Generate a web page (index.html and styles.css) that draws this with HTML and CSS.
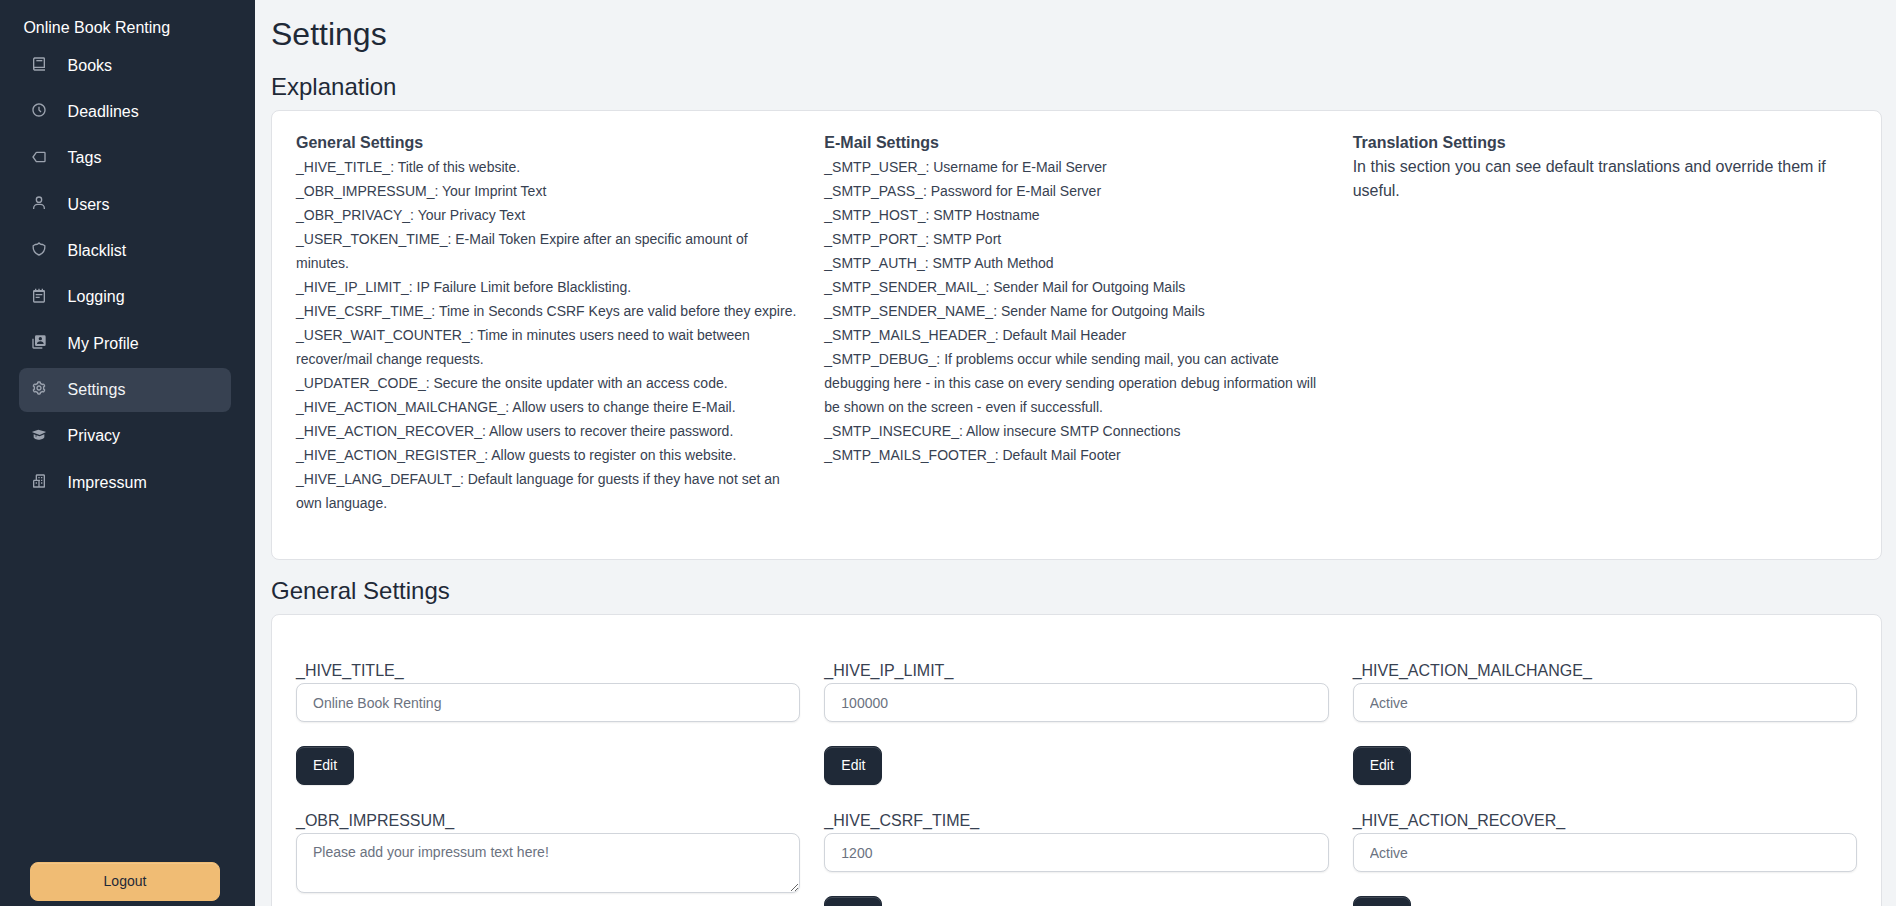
FILE: index.html
```
<!DOCTYPE html>
<html lang="en">
<head>
<meta charset="utf-8">
<title>Settings</title>
<link rel="stylesheet" href="styles.css">
</head>
<body>
<div class="layout">
  <aside class="sidebar">
    <div class="brand">Online Book Renting</div>
    <nav class="nav">
      <a class="nav-link"><svg class="icon" viewBox="0 0 24 24"><path d="M6 22h15v-2H6.012C5.55 19.988 5 19.805 5 19s.55-.988 1.012-1H21V4c0-1.103-.897-2-2-2H6c-1.206 0-3 .799-3 3v14c0 2.201 1.794 3 3 3zM5 8V5c0-.805.55-.988 1-1h13v12H5V8z"/><path d="M8 6h9v2H8z"/></svg>Books</a>
      <a class="nav-link"><svg class="icon" viewBox="0 0 24 24"><path d="M12 2C6.486 2 2 6.486 2 12s4.486 10 10 10 10-4.486 10-10S17.514 2 12 2zm0 18c-4.411 0-8-3.589-8-8s3.589-8 8-8 8 3.589 8 8-3.589 8-8 8z"/><path d="M13 7h-2v5.414l3.293 3.293 1.414-1.414L13 11.586z"/></svg>Deadlines</a>
      <a class="nav-link"><svg class="icon line" viewBox="0 0 24 24"><path d="M8.5 5H20a1 1 0 0 1 1 1v12a1 1 0 0 1-1 1H8.500a1 1 0 0 1-.8-.4L3 12l4.700-6.600a1 1 0 0 1 .8-.4z"/></svg>Tags</a>
      <a class="nav-link"><svg class="icon" viewBox="0 0 24 24"><path d="M12 2a5 5 0 1 0 5 5 5 5 0 0 0-5-5zm0 8a3 3 0 1 1 3-3 3 3 0 0 1-3 3zm9 11v-1a7 7 0 0 0-7-7h-4a7 7 0 0 0-7 7v1h2v-1a5 5 0 0 1 5-5h4a5 5 0 0 1 5 5v1z"/></svg>Users</a>
      <a class="nav-link"><svg class="icon line" viewBox="0 0 24 24"><path d="M12 3c-1.500 1.700-3.300 2.500-5.500 2.100L3.200 7.200C2.800 13.500 5 18.500 12 21c7-2.500 9.200-7.500 8.800-13.800l-3.300-2.100C15.300 5.500 13.500 4.700 12 3z"/></svg>Blacklist</a>
      <a class="nav-link"><svg class="icon" viewBox="0 0 24 24"><path d="M19 3h-1V1h-2v2h-3V1h-2v2H8V1H6v2H5a2 2 0 0 0-2 2v15a2 2 0 0 0 2 2h14a2 2 0 0 0 2-2V5a2 2 0 0 0-2-2zM5 20V6h14v14H5z"/><path d="M7 9h10v2H7zM7 13h6v2H7z"/></svg>Logging</a>
      <a class="nav-link"><svg class="icon" viewBox="0 0 24 24"><path d="M2 7v13c0 1.103.897 2 2 2h13v-2H4V7H2z"/><path fill-rule="evenodd" d="M20 2H8a2 2 0 0 0-2 2v12a2 2 0 0 0 2 2h12a2 2 0 0 0 2-2V4a2 2 0 0 0-2-2zm-6 2.500a2.500 2.500 0 1 1 0 5 2.500 2.500 0 0 1 0-5zM19 15H9v-.25C9 12.901 11.254 11 14 11s5 1.901 5 3.750V15z"/></svg>My Profile</a>
      <a class="nav-link active"><svg class="icon" viewBox="0 0 24 24"><path d="M12 16c2.206 0 4-1.794 4-4s-1.794-4-4-4-4 1.794-4 4 1.794 4 4 4zm0-6c1.084 0 2 .916 2 2s-.916 2-2 2-2-.916-2-2 .916-2 2-2z"/><path d="m2.845 16.136 1 1.730c.531.917 1.809 1.261 2.730.730l.529-.306A8.100 8.100 0 0 0 9 19.402V20c0 1.103.897 2 2 2h2c1.103 0 2-.897 2-2v-.598a8.132 8.132 0 0 0 1.896-1.111l.529.306c.923.530 2.198.188 2.731-.731l.999-1.729a2.001 2.001 0 0 0-.731-2.732l-.505-.292a7.718 7.718 0 0 0 0-2.224l.505-.292a2.002 2.002 0 0 0 .731-2.732l-.999-1.729c-.531-.920-1.808-1.265-2.731-.732l-.529.306A8.100 8.100 0 0 0 15 4.598V4c0-1.103-.897-2-2-2h-2c-1.103 0-2 .897-2 2v.598a8.132 8.132 0 0 0-1.896 1.111l-.529-.306c-.924-.531-2.200-.187-2.731.732l-.999 1.729a2.001 2.001 0 0 0 .731 2.732l.505.292a7.683 7.683 0 0 0 0 2.223l-.505.292a2.003 2.003 0 0 0-.731 2.733zm3.326-2.758A5.703 5.703 0 0 1 6 12c0-.462.058-.926.170-1.378a.999.999 0 0 0-.470-1.108l-1.123-.650.998-1.729 1.145.662a.997.997 0 0 0 1.188-.142 6.071 6.071 0 0 1 2.384-1.399A1 1 0 0 0 11 5.300V4h2v1.300a1 1 0 0 0 .708.956 6.083 6.083 0 0 1 2.384 1.399.999.999 0 0 0 1.188.142l1.144-.661 1 1.729-1.124.649a1 1 0 0 0-.470 1.108c.112.452.170.916.170 1.378 0 .461-.058.925-.171 1.378a1 1 0 0 0 .471 1.108l1.123.649-.998 1.729-1.145-.661a.996.996 0 0 0-1.188.142 6.071 6.071 0 0 1-2.384 1.399A1 1 0 0 0 13 18.700l.002 1.300H11v-1.300a1 1 0 0 0-.708-.956 6.083 6.083 0 0 1-2.384-1.399.992.992 0 0 0-1.188-.141l-1.144.662-1-1.729 1.124-.651a1 1 0 0 0 .471-1.108z"/></svg>Settings</a>
      <a class="nav-link"><svg class="icon" viewBox="0 0 24 24"><path d="M2 7v1l11 4 9-4V7L11 4z"/><path d="M4 11v4.267c0 1.621 4.001 3.893 9 3.734 4-.126 6.586-1.972 7-3.467.024-.089.037-.178.037-.268V11L13 14l-5-1.667v3.213l-1-.364V12l-3-1z"/></svg>Privacy</a>
      <a class="nav-link"><svg class="icon" viewBox="0 0 24 24"><path d="M19 2H9c-1.103 0-2 .897-2 2v6H5c-1.103 0-2 .897-2 2v9a1 1 0 0 0 1 1h16a1 1 0 0 0 1-1V4c0-1.103-.897-2-2-2zM5 12h6v8H5v-8zm14 8h-6v-8c0-1.103-.897-2-2-2H9V4h10v16z"/><path d="M11 6h2v2h-2zM15 6h2v2h-2zM15 10h2v2h-2zM15 14h2v2h-2zM7 14h2v2H7zM12 10h1.500v2H12z"/></svg>Impressum</a>
    </nav>
    <button class="btn btn-logout">Logout</button>
  </aside>
  <main class="content">
    <h1 class="page-title">Settings</h1>
    <h2 class="section-title">Explanation</h2>
    <section class="card explanation">
      <div class="columns">
        <div>
          <strong>General Settings</strong>
          <p>_HIVE_TITLE_: Title of this website.</p>
          <p>_OBR_IMPRESSUM_: Your Imprint Text</p>
          <p>_OBR_PRIVACY_: Your Privacy Text</p>
          <p>_USER_TOKEN_TIME_: E-Mail Token Expire after an specific amount of minutes.</p>
          <p>_HIVE_IP_LIMIT_: IP Failure Limit before Blacklisting.</p>
          <p>_HIVE_CSRF_TIME_: Time in Seconds CSRF Keys are valid before they expire.</p>
          <p>_USER_WAIT_COUNTER_: Time in minutes users need to wait between recover/mail change requests.</p>
          <p>_UPDATER_CODE_: Secure the onsite updater with an access code.</p>
          <p>_HIVE_ACTION_MAILCHANGE_: Allow users to change theire E-Mail.</p>
          <p>_HIVE_ACTION_RECOVER_: Allow users to recover theire password.</p>
          <p>_HIVE_ACTION_REGISTER_: Allow guests to register on this website.</p>
          <p>_HIVE_LANG_DEFAULT_: Default language for guests if they have not set an own language.</p>
        </div>
        <div>
          <strong>E-Mail Settings</strong>
          <p>_SMTP_USER_: Username for E-Mail Server</p>
          <p>_SMTP_PASS_: Password for E-Mail Server</p>
          <p>_SMTP_HOST_: SMTP Hostname</p>
          <p>_SMTP_PORT_: SMTP Port</p>
          <p>_SMTP_AUTH_: SMTP Auth Method</p>
          <p>_SMTP_SENDER_MAIL_: Sender Mail for Outgoing Mails</p>
          <p>_SMTP_SENDER_NAME_: Sender Name for Outgoing Mails</p>
          <p>_SMTP_MAILS_HEADER_: Default Mail Header</p>
          <p>_SMTP_DEBUG_: If problems occur while sending mail, you can activate debugging here - in this case on every sending operation debug information will be shown on the screen - even if successfull.</p>
          <p>_SMTP_INSECURE_: Allow insecure SMTP Connections</p>
          <p>_SMTP_MAILS_FOOTER_: Default Mail Footer</p>
        </div>
        <div>
          <strong>Translation Settings</strong>
          <p class="lead">In this section you can see default translations and override them if useful.</p>
        </div>
      </div>
    </section>
    <h2 class="section-title general-title">General Settings</h2>
    <section class="card settings">
      <div class="columns">
        <div>
          <form class="field"><label>_HIVE_TITLE_</label><input class="control" value="Online Book Renting"><button class="btn btn-edit" type="button">Edit</button></form>
          <form class="field"><label>_OBR_IMPRESSUM_</label><textarea class="control area">Please add your impressum text here!</textarea></form>
        </div>
        <div>
          <form class="field"><label>_HIVE_IP_LIMIT_</label><input class="control" value="100000"><button class="btn btn-edit" type="button">Edit</button></form>
          <form class="field"><label>_HIVE_CSRF_TIME_</label><input class="control" value="1200"><button class="btn btn-edit" type="button" aria-label="Edit"></button></form>
        </div>
        <div>
          <form class="field"><label>_HIVE_ACTION_MAILCHANGE_</label><input class="control" value="Active"><button class="btn btn-edit" type="button">Edit</button></form>
          <form class="field"><label>_HIVE_ACTION_RECOVER_</label><input class="control" value="Active"><button class="btn btn-edit" type="button" aria-label="Edit"></button></form>
        </div>
      </div>
    </section>
  </main>
</div>
</body>
</html>
```
FILE: styles.css
```
* { box-sizing: border-box; }
body {
  margin: 0;
  font: 16px/24px "Liberation Sans", Arial, sans-serif;
  color: #374151;
  background: #f2f4f6;
}
.layout { display: flex; height: 100vh; overflow: hidden; }
.sidebar {
  display: flex;
  flex-direction: column;
  flex: 0 0 255px;
  padding: 16px 24px 5px 19px;
  background: #1f2937;
  color: #fff;
}
.brand { padding-left: 4.400px; }
.nav { display: flex; flex-direction: column; gap: 2.350px; margin-top: 3.500px; }
.nav-link {
  display: flex;
  align-items: center;
  gap: 20.600px;
  height: 44px;
  padding-left: 12px;
  border-radius: 8px;
}
.nav-link.active { background: #374151; color: #f2f4f6; }
.icon { width: 16px; height: 16px; margin-bottom: 3px; fill: #9ca3af; }
.icon.line { fill: none; stroke: #9ca3af; stroke-width: 2; }
.btn {
  height: 39px;
  padding: 8px 16px;
  border-radius: 8px;
  font: 14px/21px "Liberation Sans", Arial, sans-serif;
}
.btn-logout {
  width: 190px;
  margin: auto 0 0 11px;
  border: 1px solid #f0bc74;
  background: #f0bc74;
  color: #1f2937;
  box-shadow: inset 0 1px 0 rgba(255, 255, 255, .15);
}
.content { flex: 1; min-width: 0; padding: 13px 14px 0 16px; }
.page-title { margin: 0; font-size: 32px; line-height: 42px; font-weight: 400; color: #1f2937; }
.section-title { margin: 16px 0 8px; font-size: 24px; line-height: 31px; font-weight: 400; color: #1f2937; }
.general-title { margin-top: 15px; }
.card {
  padding: 20px 24px;
  border: 1px solid #e0e2e6;
  border-radius: 8px;
  background: #fff;
}
.explanation { height: 450px; }
.settings { height: 700px; padding-top: 44px; }
.columns { display: grid; grid-template-columns: repeat(3, minmax(0, 1fr)); gap: 24px; }
.columns strong { display: block; }
.columns p { margin: 0; font-size: 14px; }
.columns .lead { font-size: 16px; }
.field { display: flex; flex-direction: column; margin-bottom: 24px; }
.control {
  width: 100%;
  height: 39px;
  padding: 8px 16px;
  border: 1px solid #d1d5db;
  border-radius: 8px;
  background: #fff;
  color: #6b7280;
  font: 14px/21px "Liberation Sans", Arial, sans-serif;
  box-shadow: 0 1px 2px rgba(0, 0, 0, .07);
}
.area { height: 60px; overflow: hidden; }
.btn-edit {
  align-self: flex-start;
  min-width: 58px;
  margin-top: 24px;
  border: 1px solid #1f2937;
  background: #1f2937;
  color: #fff;
  box-shadow: inset 0 1px 0 rgba(255, 255, 255, .15), 0 1px 1px rgba(0, 0, 0, .075);
}
```
